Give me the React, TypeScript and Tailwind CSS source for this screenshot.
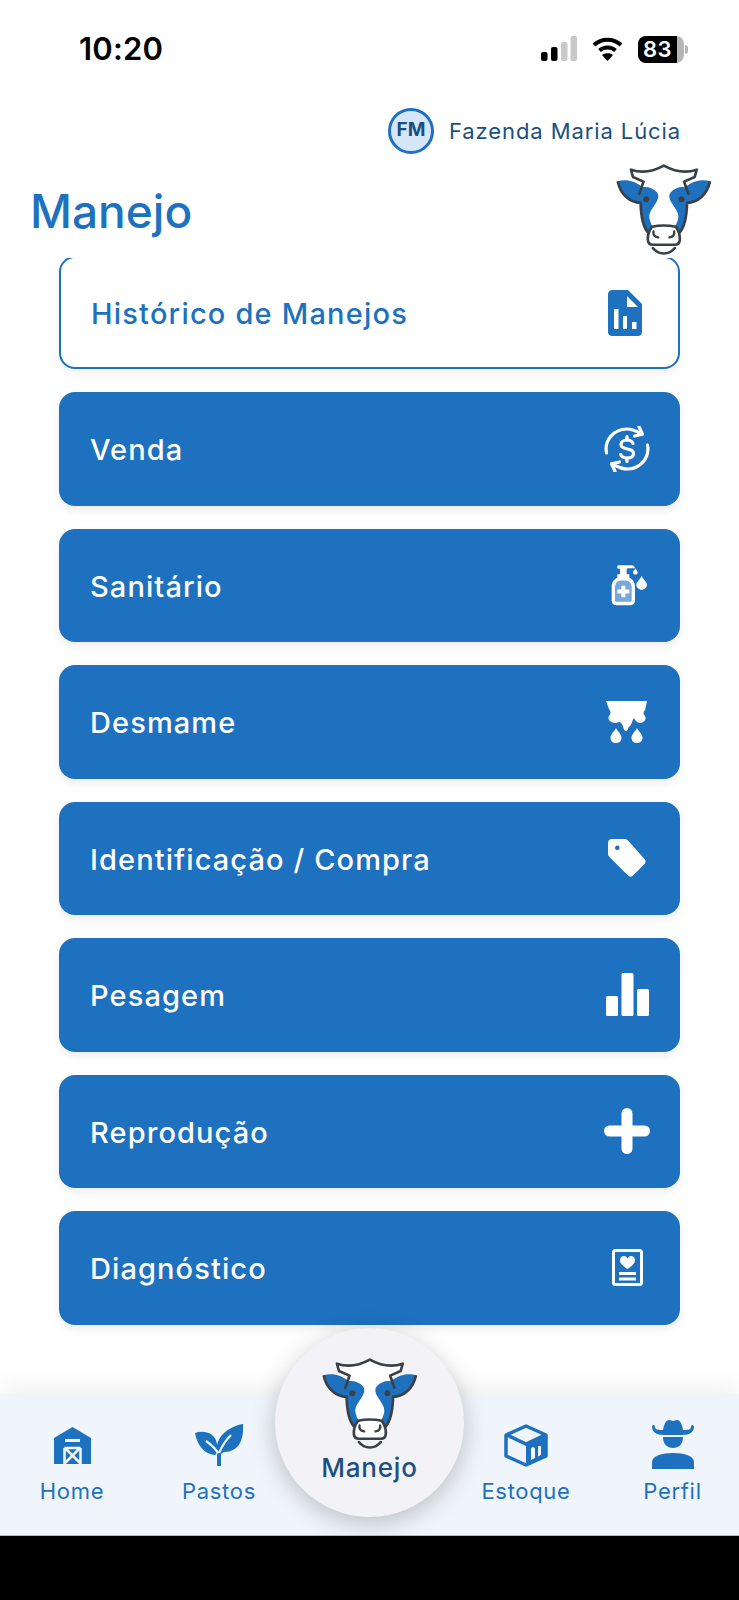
import React from "react";

const BLUE = "#1d71bf";
const INK = "#3b4046";
const font = { fontFamily: "Inter, 'Noto Sans', sans-serif" };

function Cow({ className }: { className: string }) {
  return (
    <svg viewBox="34 31 292 284" className={className} fill="none">
      <path d="M119 86L88 72L82 50C115 62 150 55 181 38C212 55 247 62 280 50L274 72L243 86L250 150L248 200L228 240H134L114 200L112 150Z" fill="#fff" />
      <path d="M42 85C66 78 96 84 116 103C132 100 150 106 160 118C168 128 164 140 156 152C146 168 134 182 138 198C140 208 144 214 146 222L134 240C120 226 112 200 111 150C80 150 50 125 42 85Z" fill={BLUE} />
      <path d="M320 85C296 78 266 84 246 103C230 100 212 106 202 118C194 128 198 140 206 152C216 168 228 182 224 198C222 208 218 214 216 222L228 240C242 226 250 200 251 150C282 150 312 125 320 85Z" fill={BLUE} />
      <path d="M106 126L120 86L88 72L82 50C115 62 150 55 181 38C212 55 247 62 280 50L274 72L242 86L256 126" stroke={INK} strokeWidth="8" strokeLinejoin="round" />
      <path d="M42 85C50 125 80 150 111 150C112 190 118 222 134 240M320 85C312 125 282 150 251 150C250 190 244 222 228 240" stroke={INK} strokeWidth="8" strokeLinejoin="round" />
      <circle cx="128" cy="139" r="9" fill={INK} />
      <circle cx="234" cy="139" r="9" fill={INK} />
      <path d="M145 222C168 217 194 217 217 222C224 232 230 250 229 262C228 272 222 276 214 276H148C140 276 134 272 133 262C132 250 138 232 145 222Z" fill="#fff" stroke={INK} strokeWidth="8" />
      <path d="M150 236C148 246 154 252 164 254M212 236C214 246 208 252 198 254" stroke={INK} strokeWidth="7" strokeLinecap="round" />
      <path d="M148 286C165 308 197 308 214 286" stroke={INK} strokeWidth="8" strokeLinecap="round" />
    </svg>
  );
}

function DocIcon() {
  return (
    <svg width="34" height="46" viewBox="0 0 34 46">
      <path d="M4 0H20L34 14V42C34 44.500 32 46 30 46H4C2 46 0 44.500 0 42V4C0 2 2 0 4 0Z" fill={BLUE} />
      <path d="M19 6L30 17H19Z" fill="#fff" />
      <rect x="6" y="19" width="4.500" height="20" fill="#fff" />
      <rect x="15" y="26" width="4" height="13" fill="#fff" />
      <rect x="24" y="32" width="4.500" height="7" fill="#fff" />
    </svg>
  );
}

function VendaIcon() {
  return (
    <svg width="46" height="46" viewBox="0 0 46 46" fill="none" stroke="#fff" strokeWidth="3.200" strokeLinecap="round" strokeLinejoin="round">
      <path d="M2.500 27C0 14 10 3 23 3C28 3 32 5 36 7" />
      <path d="M35 0.800L38.500 8.200L30.500 10" />
      <path d="M43.500 19C46 32 36 43 23 43C18 43 14 41 10 39" />
      <path d="M11 45.200L7.500 37.800L15.500 36" />
      <path d="M29 17.500C28 15 26 14 23 14C19.500 14 17 15.800 17 18.600C17 25 29.500 21 29.500 27.500C29.500 30.400 26.800 32 23 32C19.800 32 17.600 30.800 16.600 28.400" />
      <path d="M23 10.500V14M23 32V35.500" />
    </svg>
  );
}

function SanitarioIcon() {
  return (
    <svg width="40" height="42" viewBox="30 30 120 125" className="translate-x-[3px]">
      <path d="M56 33H96C100 33 104 37 105 42H88C84 42 80 42 80 46V60H88V70C98 76 105 84 105 97V140C105 148 99 153 92 153H48C41 153 35 148 35 140V97C35 84 42 76 52 70V60H60V44H56C50 44 50 33 56 33Z" fill="#fff" />
      <path d="M45 100C45 88 52 79 62 79H78C88 79 95 88 95 100V139C95 142 93 143 91 143H49C47 143 45 142 45 139Z" fill="#77a8da" />
      <path d="M64 95H76V106H88V118H76V129H64V118H52V106H64Z" fill="#fff" />
      <path d="M125 65C130 78 141 84 141 92C141 100 133 107 125 107C117 107 109 100 109 92C109 84 120 78 125 65Z" fill="#fff" />
      <path d="M106 42C108 47 113 50 113 54C113 58 110 61 106 61C102 61 99 58 99 54C99 50 104 47 106 42Z" fill="#fff" />
    </svg>
  );
}

function DesmameIcon() {
  return (
    <svg width="42" height="42" viewBox="0 0 42 42" fill="#fff">
      <path d="M0 0H41L39 9C37 11 37 13 39 15C41 18 38 22 34 22C31 22 29 19 28 17C26 19 26 24 24 25C22 26 22 30 20 30C17 30 18 25 15 22C13 20 12 22 10 22C5 22 1 19 3 15C5 13 5 10 3 8Z" />
      <path d="M10 27C12 31 15.500 33 15.500 37C15.500 40 13 42 10 42C7 42 4.500 40 4.500 37C4.500 33 8 31 10 27Z" />
      <path d="M31 27C33 31 36.500 33 36.500 37C36.500 40 34 42 31 42C28 42 25.500 40 25.500 37C25.500 33 29 31 31 27Z" />
    </svg>
  );
}

function TagIcon() {
  return (
    <svg width="38" height="38" viewBox="0 0 38 38">
      <path fillRule="evenodd" d="M4 0H17C18 0 19 .5 20 1.500L36.500 20C38 21.500 38 23.500 36.500 25L25 36.500C23.500 38 21.500 38 20 36.500L1.500 18C.5 17 0 16 0 15V4C0 1.500 1.500 0 4 0ZM9.500 6.500C8 6.500 7 7.500 7 9C7 10.500 8 11 9.500 11C11 11 11.500 10 11.500 9C11.500 7.500 11 6.500 9.500 6.500Z" fill="#fff" />
    </svg>
  );
}

function PesagemIcon() {
  return (
    <svg width="43" height="43" viewBox="0 0 43 43" fill="#fff">
      <rect x="0" y="23" width="12" height="20" rx="1.500" />
      <rect x="15.500" y="0" width="12" height="43" rx="1.500" />
      <rect x="31" y="16" width="12" height="27" rx="1.500" />
    </svg>
  );
}

function PlusIcon() {
  return (
    <svg width="46" height="46" viewBox="0 0 46 46" fill="none" stroke="#fff" strokeWidth="11" strokeLinecap="round">
      <path d="M23 5.500V40.500M5.500 23H40.500" />
    </svg>
  );
}

function DiagIcon() {
  return (
    <svg width="31" height="37" viewBox="0 0 31 37">
      <rect x="1.500" y="1.500" width="28" height="34" rx="2" fill="none" stroke="#fff" strokeWidth="3" />
      <path d="M15.500 20C11 17 8 14.500 8 11C8 8.500 10 7 12 7C13.500 7 14.800 8 15.500 9.300C16.200 8 17.500 7 19 7C21 7 23 8.500 23 11C23 14.500 20 17 15.500 20Z" fill="#fff" />
      <rect x="7" y="23" width="17" height="3" fill="#fff" />
      <rect x="7" y="28.500" width="17" height="3" fill="#fff" />
    </svg>
  );
}

function HomeIcon() {
  return (
    <svg width="37" height="37" viewBox="0 0 37 37">
      <path d="M18.500 0L37 11V37H0V11Z" fill={BLUE} />
      <rect x="11" y="12" width="15" height="3" fill="#f0f5fb" />
      <path d="M10.500 21H26.500M10.500 21V37M26.500 21V37M11 21L26 36M26 21L11 36" stroke="#f0f5fb" strokeWidth="2.600" fill="none" />
    </svg>
  );
}

function PastosIcon() {
  return (
    <svg width="48" height="42" viewBox="0 0 48 42">
      <path d="M22 28C20 14 32 3 48 0C49 14 45 27 30 28C28 28 26 30 24 32C23 30 23 29 22 28Z" fill={BLUE} />
      <path d="M0 9C8 6 20 8 22 20C23 26 22 30 20 31C8 30 2 20 0 9Z" fill={BLUE} />
      <path d="M24 33V31C22 26 18 22 11 17M24 29C27 22 31 16 36 11" fill="none" stroke="#f0f5fb" strokeWidth="2.200" />
      <path d="M24 41V31" stroke={BLUE} strokeWidth="4" strokeLinecap="round" />
    </svg>
  );
}

function EstoqueIcon() {
  return (
    <svg width="44" height="43" viewBox="0 0 44 43">
      <path d="M22 2L42 11V32L22 41L2 32V11Z" fill="none" stroke={BLUE} strokeWidth="3.500" strokeLinejoin="round" />
      <path d="M3 11L22 20L41 11" fill="none" stroke={BLUE} strokeWidth="3.500" />
      <path d="M22 20L43 11V32L22 42Z" fill={BLUE} />
      <path d="M27 36V25C27 22.500 31 22.500 31 25V34ZM34 32.500V22H37V31Z" fill="#f0f5fb" />
    </svg>
  );
}

function PerfilIcon() {
  return (
    <svg width="42" height="50" viewBox="0 0 42 50" fill={BLUE}>
      <path d="M0 6C2 4 3 5 3 7C3 10 7 10 11 10C12 4 14 0 17 0C19 0 20 1 21 1C22 1 23 0 25 0C28 0 30 4 31 10C35 10 39 10 39 7C39 5 40 4 42 6C42 12 38 15 30 15H12C4 15 0 12 0 6Z" />
      <path d="M11 17H31C31 24 27 28 21 28C15 28 11 24 11 17Z" />
      <path d="M0 49V42C0 36 10 33 21 33C32 33 42 36 42 42V49Z" />
    </svg>
  );
}

const rows: [string, React.ReactNode][] = [
  ["Venda", <VendaIcon />],
  ["Sanitário", <SanitarioIcon />],
  ["Desmame", <DesmameIcon />],
  ["Identificação / Compra", <TagIcon />],
  ["Pesagem", <PesagemIcon />],
  ["Reprodução", <PlusIcon />],
  ["Diagnóstico", <DiagIcon />],
];

function NavItem({ icon, label }: { icon: React.ReactNode; label: string }) {
  return (
    <div className="flex flex-col items-center">
      <div className="h-[52px] flex items-center justify-center">{icon}</div>
      <span className="text-[22px] leading-[30px] tracking-[0.7px] text-[#1d71bf] mt-[5px]">{label}</span>
    </div>
  );
}

export default function App() {
  return (
    <div className="w-[739px] h-[1600px] flex flex-col bg-white overflow-hidden relative" style={font}>
      <div className="h-[108px] flex justify-between pl-[79px] pr-[51px] pt-[29px] shrink-0">
        <span className="text-[31px] leading-[40px] font-semibold text-black tracking-[0.2px]">10:20</span>
        <div className="flex items-start gap-[15px] pt-[7px]">
          <svg width="36" height="25" viewBox="0 0 36 25">
            <rect x="0" y="16" width="6.500" height="9" rx="2" fill="#000" />
            <rect x="10" y="11" width="6.500" height="14" rx="2" fill="#000" />
            <rect x="20" y="6" width="6.500" height="19" rx="2" fill="#c9c9c9" />
            <rect x="29.500" y="0" width="6.500" height="25" rx="2" fill="#c9c9c9" />
          </svg>
          <svg width="31" height="25" viewBox="0 0 31 25" fill="none" stroke="#000" strokeWidth="4">
            <path d="M2 9C9.500 2 21.500 2 29 9" />
            <path d="M7.500 14.500C12 10.500 19 10.500 23.500 14.500" />
            <path d="M15.500 25L10 19C13 16.500 18 16.500 21 19Z" fill="#000" stroke="none" />
          </svg>
          <div className="flex items-center">
            <div className="w-[46px] h-[27px] rounded-[8px] overflow-hidden flex bg-[#b5b5b5]">
              <div className="w-[39px] bg-black text-white text-[22px] leading-[27px] font-semibold text-center tracking-[0.5px]">83</div>
            </div>
            <div className="w-[3px] h-[9px] bg-[#b5b5b5] rounded-r-[3px] ml-[1px]" />
          </div>
        </div>
      </div>

      <div className="h-[45px] flex justify-end items-center gap-[15px] pr-[58px] shrink-0">
        <div className="w-[46px] h-[46px] rounded-full border-[3px] border-[#1d71bf] bg-[#d6e6fa] flex items-center justify-center text-[19px] font-bold text-[#1a4e80]">FM</div>
        <span className="text-[22px] leading-[30px] text-[#1c4f82] tracking-[0.9px]">Fazenda Maria Lúcia</span>
      </div>

      <div className="h-[105px] pt-[11px] pl-[30px] flex items-center shrink-0 relative z-10">
        <h1 className="text-[46px] leading-[52px] font-medium text-[#1d71bf]">Manejo</h1>
        <Cow className="absolute left-[615px] top-[10px] w-[97px] h-[95px]" />
      </div>

      <div className="overflow-hidden px-[59px] pb-[12px] shrink-0">
        <div className="flex flex-col gap-[23px] -mt-[2px]">
          <div className="h-[113px] rounded-[16px] border-2 border-[#1d71bf] bg-white flex items-center justify-between pl-[30px] pr-[30px] shadow-[0_4px_10px_rgba(0,0,0,0.06)]">
            <span className="text-[29px] leading-[36px] tracking-[1.2px] text-[#1d71bf] font-[450] pt-[3px]">Histórico de Manejos</span>
            <div className="w-[46px] flex justify-center"><DocIcon /></div>
          </div>
          {rows.map(([label, icon]) => (
            <div key={label} className="h-[113.500px] rounded-[16px] bg-[#1d71bf] flex items-center justify-between pl-[31px] pr-[30px] shadow-[0_4px_10px_rgba(0,0,0,0.08)]">
              <span className="text-[29px] leading-[36px] tracking-[1.1px] text-white font-[450] pt-[3px]">{label}</span>
              <div className="w-[46px] flex justify-center">{icon}</div>
            </div>
          ))}
        </div>
      </div>

      <div className="flex-1" />

      <div className="h-[142px] shrink-0 bg-[#f0f5fb] border-b border-[#b8bcc0] shadow-[0_-8px_24px_rgba(0,0,0,0.06)] grid grid-cols-[144px_150px_152px_160px_133px] pt-[25px] relative">
        <NavItem icon={<HomeIcon />} label="Home" />
        <NavItem icon={<PastosIcon />} label="Pastos" />
        <div />
        <NavItem icon={<EstoqueIcon />} label="Estoque" />
        <NavItem icon={<PerfilIcon />} label="Perfil" />
        <div className="absolute left-[275px] top-[-66px] w-[189px] h-[189px] rounded-full bg-[#f2f2f7] shadow-[0_6px_24px_rgba(0,0,0,0.22)] flex flex-col items-center pt-[29px]">
          <Cow className="w-[97px] h-[95px]" />
          <span className="text-[26px] leading-[32px] font-[450] text-[#1c4f82] tracking-[0.8px]">Manejo</span>
        </div>
      </div>

      <div className="h-[64px] bg-black shrink-0" />
    </div>
  );
}
